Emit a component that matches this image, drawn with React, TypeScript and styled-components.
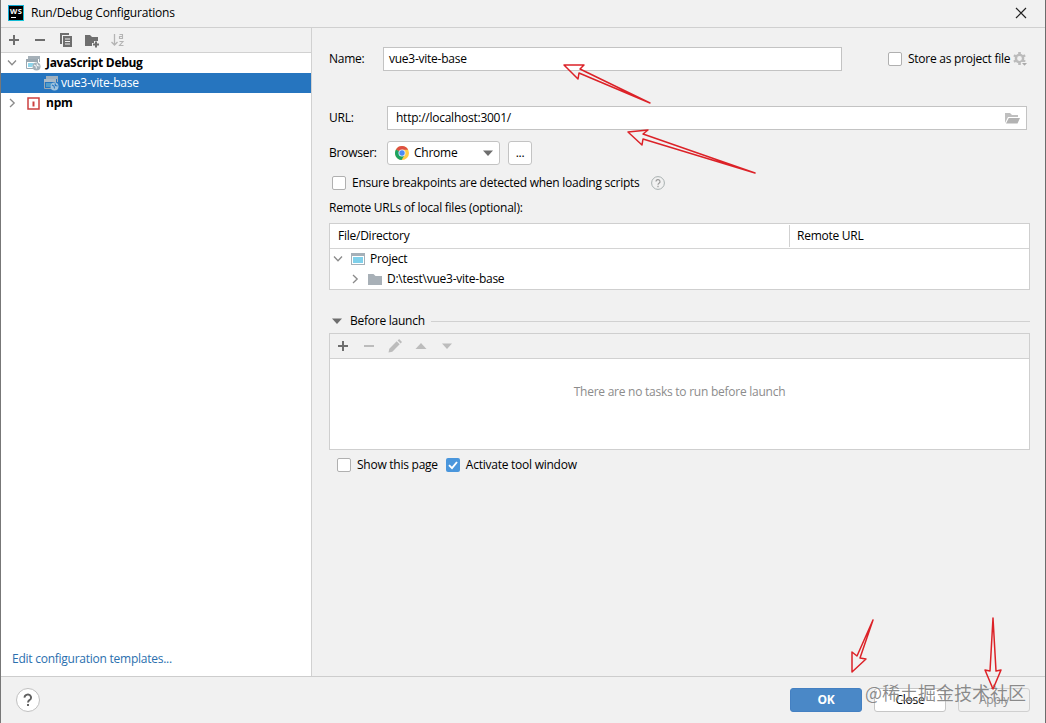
import React from "react";
import styled, { createGlobalStyle } from "styled-components";

const Global = createGlobalStyle`
  * { box-sizing: border-box; }
  html, body { margin: 0; padding: 0; }
  body {
    width: 1046px; height: 723px; overflow: hidden; background: #f1f1f1;
    font-family: "Open Sans", "Noto Sans", "Noto Sans CJK SC", sans-serif;
    font-size: 12px; color: #000;
  }
  svg { display: block; flex: none; }
`;

const Dialog = styled.div`
  position: relative;
  display: flex;
  flex-direction: column;
  width: 1046px;
  height: 723px;
  background: #f1f1f1;
  border-left: 1px solid #777;
  border-right: 1px solid #6c6c6c;
`;
const Text = styled.span<{ $ls?: number; $bold?: boolean; $color?: string; $dy?: number }>`
  white-space: pre;
  line-height: 20px;
  letter-spacing: ${(p) => p.$ls ?? -0.25}px;
  font-weight: ${(p) => (p.$bold ? 700 : 400)};
  color: ${(p) => p.$color ?? "#000"};
  padding-top: ${(p) => p.$dy ?? 0}px;
`;
const TitleBar = styled.header`
  display: flex;
  align-items: center;
  height: 28px;
  padding: 0 18px 1px 7px;
  border-bottom: 1px solid #d0d0d0;
  gap: 7px;
`;
const Spacer = styled.div`
  flex: 1;
`;
const Body = styled.div`
  display: flex;
  height: 648px;
`;
const Sidebar = styled.aside`
  display: flex;
  flex-direction: column;
  width: 311px;
  background: #fff;
  border-right: 1px solid #d1d1d1;
`;
const SideTools = styled.div`
  display: flex;
  align-items: center;
  gap: 10px;
  height: 25px;
  padding-left: 5px;
  background: #f1f1f1;
  border-bottom: 1px solid #d1d1d1;
`;
const TreeRow = styled.div<{ $indent: number; $selected?: boolean; $gap?: number }>`
  display: flex;
  align-items: center;
  height: 20px;
  gap: ${(p) => p.$gap ?? 2}px;
  padding-left: ${(p) => p.$indent}px;
  background: ${(p) => (p.$selected ? "#2675bf" : "transparent")};
`;
const SideFooter = styled.div`
  margin-top: auto;
  padding: 0 0 7px 11px;
  height: 27px;
  display: flex;
`;
const Main = styled.main`
  display: flex;
  flex-direction: column;
  flex: 1;
  padding: 19px 15px 0 17px;
`;
const Row = styled.div<{ $h: number; $mt?: number; $pl?: number; $pr?: number }>`
  display: flex;
  align-items: center;
  flex: none;
  height: ${(p) => p.$h}px;
  margin-top: ${(p) => p.$mt ?? 0}px;
  padding-left: ${(p) => p.$pl ?? 0}px;
  padding-right: ${(p) => p.$pr ?? 0}px;
`;
const Caption = styled.div<{ $w: number }>`
  display: flex;
  width: ${(p) => p.$w}px;
`;
const Field = styled.div<{ $w: number; $pl: number }>`
  display: flex;
  align-items: center;
  justify-content: space-between;
  width: ${(p) => p.$w}px;
  height: 24px;
  padding: 0 6px 0 ${(p) => p.$pl}px;
  background: #fff;
  border: 1px solid #c3c3c3;
`;
const Select = styled.div`
  display: flex;
  align-items: center;
  width: 113px;
  height: 24px;
  padding: 0 6px;
  background: #fff;
  border: 1px solid #c3c3c3;
  border-radius: 3px;
  gap: 4px;
`;
const MoreButton = styled.div`
  display: flex;
  justify-content: center;
  align-items: center;
  width: 24px;
  height: 24px;
  margin-left: 8px;
  background: #fff;
  border: 1px solid #c3c3c3;
  border-radius: 3px;
`;
const Box = styled.div<{ $on?: boolean }>`
  width: 14px;
  height: 14px;
  flex: none;
  border: 1px solid ${(p) => (p.$on ? "#4a8fd6" : "#b0b0b0")};
  border-radius: 2px;
  background: ${(p) => (p.$on ? "#4f9ee3" : "#fff")};
`;
const Panel = styled.section<{ $h: number; $mt: number }>`
  display: flex;
  flex-direction: column;
  flex: none;
  width: 701px;
  height: ${(p) => p.$h}px;
  margin-top: ${(p) => p.$mt}px;
  background: #fff;
  border: 1px solid #cfcfcf;
`;
const TableHead = styled.div`
  display: grid;
  grid-template-columns: 459px 1fr;
  align-items: center;
  height: 25px;
  border-bottom: 1px solid #d4d4d4;
`;
const HeadCell = styled.div<{ $line?: boolean; $pl: number }>`
  display: flex;
  align-items: center;
  height: 22px;
  padding-left: ${(p) => p.$pl}px;
  border-left: ${(p) => (p.$line ? "1px solid #d1d1d1" : "none")};
`;
const TaskTools = styled.div`
  display: flex;
  align-items: center;
  gap: 10px;
  height: 25px;
  padding-left: 5px;
  background: #f1f1f1;
  border-bottom: 1px solid #d1d1d1;
`;
const Empty = styled.div`
  display: flex;
  justify-content: center;
  padding-top: 23px;
`;
const Rule = styled.div`
  flex: 1;
  height: 1px;
  background: #d1d1d1;
`;
const Footer = styled.footer`
  display: flex;
  align-items: center;
  gap: 12px;
  height: 47px;
  padding: 0 15px 0 15px;
  border-top: 1px solid #cdcdcd;
`;
const HelpButton = styled.div`
  display: flex;
  align-items: center;
  justify-content: center;
  width: 24px;
  height: 24px;
  border-radius: 50%;
  border: 1px solid #c0c0c0;
  background: #fff;
`;
const Button = styled.div<{ $kind: "primary" | "plain" | "disabled" }>`
  display: flex;
  align-items: center;
  justify-content: center;
  width: 72px;
  height: 24px;
  border-radius: 3px;
  border: 1px solid ${(p) => (p.$kind === "primary" ? "#4480c2" : p.$kind === "plain" ? "#c6c6c6" : "#d0d0d0")};
  background: ${(p) => (p.$kind === "primary" ? "#4a88c7" : p.$kind === "plain" ? "#fff" : "#f1f1f1")};
`;
const Overlay = styled.svg`
  position: absolute;
  left: -1px;
  top: 0;
  pointer-events: none;
`;
const Watermark = styled.div`
  position: absolute;
  left: 864px;
  top: 680px;
  font-family: "Noto Sans CJK SC", sans-serif;
  font-size: 18px;
  line-height: 25px;
  letter-spacing: 0;
  white-space: pre;
  color: rgba(95, 95, 95, 0.72);
  text-shadow: 0 0 1px rgba(255, 255, 255, 0.7);
`;

const DARK = "#6e6e6e";
const PALE = "#bcbcbc";

const Plus = () => (
  <svg width="16" height="16"><path d="M8 3v10M3 8h10" stroke={DARK} strokeWidth="2" /></svg>
);
const Minus = ({ c = DARK }: { c?: string }) => (
  <svg width="16" height="16"><path d="M3 8h10" stroke={c} strokeWidth="2" /></svg>
);
const Copy = () => (
  <svg width="16" height="16">
    <path d="M2 1h9v2H4v9H2z" fill={DARK} />
    <path d="M5 4h9v11H5zM7 6.5v1h5v-1zM7 9v1h5V9zM7 11.500v1h5v-1z" fill={DARK} fillRule="evenodd" />
  </svg>
);
const NewFolder = () => (
  <svg width="16" height="16">
    <path d="M1 3h5l2 2h6v4h-4v2H8v3H1z" fill={DARK} />
    <path d="M12 9.500v6M9 12.500h6" stroke={DARK} strokeWidth="2" />
  </svg>
);
const SortAz = () => (
  <svg width="16" height="16" fill="none" stroke="#b4b4b4">
    <path d="M4.500 2v11M1.500 10l3 3 3-3" strokeWidth="1.300" />
    <path d="M9.500 2.500h3v4h-3v-2h3M9.500 9.500h3.500l-3.500 4h4" strokeWidth="1.100" />
  </svg>
);
const Chevron = ({ open, c = "#8a8a8a" }: { open?: boolean; c?: string }) => (
  <svg width="16" height="16" fill="none" stroke={c} strokeWidth="1.300">
    <path d={open ? "M4 5.500l4 4.200 4-4.200" : "M6 4l4.200 4L6 12"} />
  </svg>
);
const JsDebug = ({ sel }: { sel?: boolean }) => (
  <svg width="16" height="16">
    <path d="M3 1h12v3H3z" fill={sel ? "#9eb0bf" : "#a5b0b8"} />
    <path d="M3.500 4v2M14.500 4v3" stroke="#a5b0b8" />
    <path d="M1 4h12v3H1z" fill={sel ? "#a9bac8" : "#9ba8b1"} />
    <path d="M1.500 7v6.500H8M12.500 7v1" fill="none" stroke="#9ba8b1" />
    <path d="M3 8h6l-2 4H3z" fill={sel ? "#4f9cca" : "#8fd4ea"} />
    <circle cx="11.500" cy="11.500" r="4" fill={sel ? "#9fc3de" : "#a3b1ba"} />
    <path d="M9 10l2 1 .5 2.500M12 8.500l.5 2 2 .5" fill="none" stroke={sel ? "#2675bf" : "#f3f6f8"} strokeWidth="1.100" />
  </svg>
);
const Npm = () => (
  <svg width="16" height="16">
    <path d="M3 3h11v11H3z" fill="#fff" stroke="#cc4040" strokeWidth="1.500" />
    <path d="M8.500 6.500v5" stroke="#cc4040" strokeWidth="2" />
  </svg>
);
const Folder = () => (
  <svg width="16" height="16"><path d="M1 3h5.500l2 2H15v9H1z" fill="#a8b0b7" /></svg>
);
const Project = () => (
  <svg width="16" height="16">
    <path d="M1 2h14v12H1z" fill="#a5b0b8" />
    <path d="M2 5h12v8H2z" fill="#fff" />
    <path d="M3 6h10v6H3z" fill="#7fd0ea" />
  </svg>
);
const OpenFolder = () => (
  <svg width="16" height="16">
    <path d="M1 3h5l2 2h6v2H4l-3 6z" fill="#bfbfbf" />
    <path d="M4.800 8H16l-2.500 5.500H2z" fill="#b3b3b3" />
  </svg>
);
const Gear = () => (
  <svg width="16" height="16">
    <circle cx="7.500" cy="7.500" r="3.600" fill="none" stroke="#bbb" strokeWidth="2.400" />
    <g stroke="#bbb" strokeWidth="2.600">
      <path d="M7.500 1v2.500M7.500 11.500V14M1.900 4.250l2.100 1.250M11 9.500l2.100 1.250M1.900 10.750L4 9.500M11 5.500l2.100-1.250" />
    </g>
    <path d="M8.500 11h7l-3.500 4z" fill="#f1f1f1" />
    <path d="M10 12h5l-2.500 2.700z" fill="#aaa" />
  </svg>
);
const Chrome = () => (
  <svg width="16" height="16" viewBox="0 0 16 16">
    <circle cx="8" cy="8" r="7" fill="#ffcd46" />
    <path d="M8 8L1.940 4.500A7 7 0 0 1 14.100 4.700H8z" fill="#dd4f43" />
    <path d="M8 8L1.940 4.500A7 7 0 0 0 7.500 15L10.800 9.700z" fill="#1da362" />
    <circle cx="8" cy="8" r="3.500" fill="#f4f4f4" />
    <circle cx="8" cy="8" r="2.700" fill="#4a8bf5" />
  </svg>
);
const Triangle = ({ up, c = DARK, w = 16 }: { up?: boolean; c?: string; w?: number }) => (
  <svg width={w} height="16" viewBox={`${(16 - w) / 2} 0 ${w} 16`}>
    <path d={up ? "M2.500 11L8 5l5.500 6z" : "M3 5.500h10L8 11z"} fill={c} />
  </svg>
);
const Pencil = () => (
  <svg width="16" height="16">
    <path d="M1.500 14.500l.8-3.800 7.400-7.400 3 3-7.400 7.400zM10.600 2.400l1.500-1.300 2.900 2.900-1.400 1.400z" fill={PALE} />
  </svg>
);
const WebStorm = () => (
  <svg width="16" height="16">
    <defs>
      <linearGradient id="ws" x1="0" y1="0" x2="1" y2="1">
        <stop offset="0" stopColor="#0d9fd0" /><stop offset="1" stopColor="#14c8d8" />
      </linearGradient>
    </defs>
    <path d="M0 0h16v16H0z" fill="url(#ws)" />
    <path d="M1 1h14v14H1z" fill="#000" />
    <text x="2" y="8.500" fill="#fff" fontSize="7.500" fontWeight="700" textLength="12" fontFamily="Open Sans">WS</text>
    <path d="M3 12.500h5" stroke="#fff" />
  </svg>
);

export default function App() {
  return (
    <>
      <Global />
      <Dialog>
        <TitleBar>
          <WebStorm />
          <Text $ls={-0.2}>Run/Debug Configurations</Text>
          <Spacer />
          <svg width="12" height="12"><path d="M1 1l10 10M11 1L1 11" stroke="#222" strokeWidth="1.200" /></svg>
        </TitleBar>
        <Body>
          <Sidebar>
            <SideTools>
              <Plus /><Minus /><Copy /><NewFolder /><SortAz />
            </SideTools>
            <TreeRow $indent={3} $gap={5}>
              <Chevron open /><JsDebug />
              <Text $bold $ls={-0.3}>JavaScript Debug</Text>
            </TreeRow>
            <TreeRow $indent={42} $selected>
              <JsDebug sel />
              <Text $color="#fff">vue3-vite-base</Text>
            </TreeRow>
            <TreeRow $indent={3} $gap={5}>
              <Chevron /><Npm />
              <Text $bold>npm</Text>
            </TreeRow>
            <SideFooter>
              <Text $color="#2b6fae">Edit configuration templates...</Text>
            </SideFooter>
          </Sidebar>
          <Main>
            <Row $h={24}>
              <Caption $w={54}><Text>Name:</Text></Caption>
              <Field $w={459} $pl={5}><Text>vue3-vite-base</Text></Field>
              <Row $h={24} $pl={46}>
                <Box />
                <Caption $w={104}><Text style={{ marginLeft: 6 }}>Store as project file</Text></Caption>
                <Row $h={24} $pl={6}><Gear /></Row>
              </Row>
            </Row>
            <Row $h={24} $mt={35}>
              <Caption $w={58}><Text>URL:</Text></Caption>
              <Field $w={640} $pl={8}><Text>http://localhost:3001/</Text><OpenFolder /></Field>
            </Row>
            <Row $h={24} $mt={11}>
              <Caption $w={58}><Text>Browser:</Text></Caption>
              <Select><Chrome /><Text>Chrome</Text><Spacer /><Triangle w={10} /></Select>
              <MoreButton><Text>...</Text></MoreButton>
            </Row>
            <Row $h={20} $mt={8} $pl={3}>
              <Box />
              <Row $h={20} $pl={6}><Text>Ensure breakpoints are detected when loading scripts</Text></Row>
              <Row $h={20} $pl={11}>
                <svg width="14" height="14">
                  <circle cx="7" cy="7" r="6.400" fill="none" stroke="#a8b0b0" />
                  <path d="M5 5.600a2 2 0 1 1 3 1.700c-.8.500-1 .7-1 1.400M7 9.800v1.400" fill="none" stroke="#999" strokeWidth="1.200" />
                </svg>
              </Row>
            </Row>
            <Row $h={20} $mt={5}><Text>Remote URLs of local files (optional):</Text></Row>
            <Panel $h={67} $mt={5}>
              <TableHead>
                <HeadCell $pl={8}><Text>File/Directory</Text></HeadCell>
                <HeadCell $pl={7} $line><Text>Remote URL</Text></HeadCell>
              </TableHead>
              <TreeRow $indent={0} $gap={4}><Chevron open /><Project /><Text>Project</Text></TreeRow>
              <TreeRow $indent={17} $gap={4}><Chevron /><Folder /><Text>D:\test\vue3-vite-base</Text></TreeRow>
            </Panel>
            <Row $h={20} $mt={21} $pr={0}>
              <Triangle />
              <Row $h={20} $pl={5} $pr={6}><Text>Before launch</Text></Row>
              <Rule />
            </Row>
            <Panel $h={117} $mt={2}>
              <TaskTools>
                <Plus /><Minus c={PALE} /><Pencil /><Triangle up c={PALE} /><Triangle c={PALE} />
              </TaskTools>
              <Empty><Text $color="#8c8c8c">There are no tasks to run before launch</Text></Empty>
            </Panel>
            <Row $h={20} $mt={5} $pl={8}>
              <Box />
              <Row $h={20} $pl={6} $pr={8}><Text>Show this page</Text></Row>
              <svg width="14" height="14">
                <rect width="14" height="14" rx="2" fill="#4a96dc" />
                <path d="M3 7.200l3 3L11 4" fill="none" stroke="#fff" strokeWidth="1.900" />
              </svg>
              <Row $h={20} $pl={6}><Text>Activate tool window</Text></Row>
            </Row>
          </Main>
        </Body>
        <Footer>
          <HelpButton>
            <svg width="12" height="14">
              <path d="M2.600 4.600a3.200 3 0 1 1 4.800 2.500C6.200 7.900 6 8.300 6 9.500M6 11v2" fill="none" stroke="#606060" strokeWidth="1.900" />
            </svg>
          </HelpButton>
          <Spacer />
          <Button $kind="primary"><Text $bold $color="#fff">OK</Text></Button>
          <Button $kind="plain"><Text>Close</Text></Button>
          <Button $kind="disabled"><Text $color="#8c8c8c">Apply</Text></Button>
        </Footer>
        <Watermark>@稀土掘金技术社区</Watermark>
        <Overlay width="1046" height="723" fill="none" stroke="#dc2228" strokeWidth="1.500" strokeLinejoin="round" strokeLinecap="round">
          <path d="M650 103L580 69l4-4-20 0 14 14 1-6z" />
          <path d="M755 173L643 134l5-4-20 2 14 13 1-6z" />
          <path d="M873 620L857 656l-5-4v20l14-13-6-1z" />
          <path d="M993 618L990 671l-5-1 8 19 8-19-5 1z" />
        </Overlay>
      </Dialog>
    </>
  );
}
